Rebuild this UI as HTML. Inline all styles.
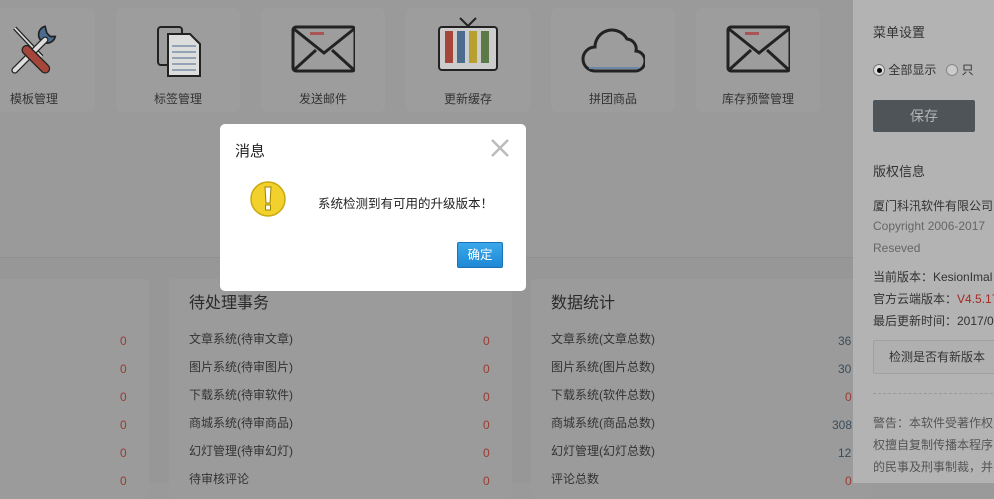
<!DOCTYPE html>
<html><head><meta charset="utf-8"><style>
*{margin:0;padding:0;box-sizing:border-box}
body{width:994px;height:483px;overflow:hidden;position:relative;background:#9a9a9a;font-family:"Liberation Sans","Noto Sans CJK SC",sans-serif;color:#2e2e2e}
.tile{position:absolute;top:8px;width:124px;height:104px;background:#9d9d9d;border-radius:6px}
.tile .lb{position:absolute;top:82px;left:0;width:100%;text-align:center;font-size:12px;color:#333}
.tile svg{position:absolute;top:8px;left:30px}
.band{position:absolute;left:0;top:257px;width:853px;height:226px;background:#979797;border-top:1px solid #909090}
.card{position:absolute;top:279px;height:220px;background:#9b9b9b;border-radius:4px}
.card h3{position:absolute;left:20px;top:10px;font-size:16px;font-weight:normal;color:#2a2a2a}
.row{position:absolute;left:20px;font-size:12px;color:#333}
.num{position:absolute;font-size:12px}
.red{color:#9a3a30}.blu{color:#3a4c5a}
.rp{position:absolute;left:853px;top:0;width:141px;height:483px;background:#b3b3b3;font-size:12px;color:#333;white-space:nowrap;overflow:hidden}
.rp div{position:absolute;left:20px}
.dlg{position:absolute;left:220px;top:124px;width:306px;height:167px;background:#fff;border-radius:5px}
</style></head><body>
<div class="tile" style="left:-29px"><svg width="64" height="64" viewBox="0 0 64 64" style="left:37px;top:15px;width:54px;height:54px"><line x1="8" y1="6" x2="40" y2="40" stroke="#222" stroke-width="5"/><line x1="8" y1="6" x2="40" y2="40" stroke="#ddd" stroke-width="2"/><path d="M44 4a10 10 0 1 0 12 12l-6 0-4-4z" fill="#4b6c8f" stroke="#222" stroke-width="2"/><line x1="44" y1="20" x2="8" y2="56" stroke="#222" stroke-width="8" stroke-linecap="round"/><line x1="44" y1="20" x2="8" y2="56" stroke="#ddd" stroke-width="5" stroke-linecap="round"/><line x1="22" y1="32" x2="44" y2="54" stroke="#222" stroke-width="12" stroke-linecap="round"/><line x1="22" y1="32" x2="44" y2="54" stroke="#a6463a" stroke-width="9" stroke-linecap="round"/></svg><div class="lb" style="left:39px;width:auto">模板管理</div></div>
<div class="tile" style="left:116px"><svg width="64" height="64" viewBox="0 0 64 64"><rect x="12" y="11" width="24" height="38" rx="3" fill="#9d9d9d" stroke="#222" stroke-width="2"/><path d="M22 18h22l10 10v32h-32z" fill="#ddd" stroke="#222" stroke-width="2"/><g stroke="#7990a8" stroke-width="1.5"><line x1="26" y1="30" x2="50" y2="30"/><line x1="26" y1="36" x2="50" y2="36"/><line x1="26" y1="42" x2="50" y2="42"/><line x1="26" y1="48" x2="50" y2="48"/><line x1="26" y1="54" x2="50" y2="54"/></g></svg><div class="lb">标签管理</div></div>
<div class="tile" style="left:261px"><svg width="64" height="64" viewBox="0 0 64 64"><rect x="2" y="11" width="62" height="44" rx="3" fill="#9d9d9d" stroke="#222" stroke-width="3"/><path d="M3 13l30 24 30-24M3 54l22-20M63 54l-22-20" fill="none" stroke="#222" stroke-width="3"/><rect x="19" y="16" width="14" height="3" fill="#a55"/></svg><div class="lb">发送邮件</div></div>
<div class="tile" style="left:406px"><svg width="64" height="64" viewBox="0 0 64 64"><path d="M24 2l8 8 8-8" fill="none" stroke="#222" stroke-width="2"/><rect x="3" y="11" width="58" height="43" rx="3" fill="#ccc" stroke="#222" stroke-width="2"/><rect x="9" y="15" width="8" height="32" fill="#a6463a"/><rect x="21" y="15" width="8" height="32" fill="#4b6c8f"/><rect x="33" y="15" width="8" height="32" fill="#b8a030"/><rect x="45" y="15" width="8" height="32" fill="#5b7a48"/></svg><div class="lb">更新缓存</div></div>
<div class="tile" style="left:551px"><svg width="64" height="64" viewBox="0 0 64 64"><path d="M14 55a12 12 0 0 1 0-24 17 17 0 0 1 32-8 10 10 0 0 1 9 12 10 10 0 0 1-2 20z" fill="#9d9d9d" stroke="#222" stroke-width="3"/><line x1="8" y1="52" x2="58" y2="52" stroke="#6d87a8" stroke-width="2"/></svg><div class="lb">拼团商品</div></div>
<div class="tile" style="left:696px"><svg width="64" height="64" viewBox="0 0 64 64"><rect x="2" y="11" width="62" height="44" rx="3" fill="#9d9d9d" stroke="#222" stroke-width="3"/><path d="M3 13l30 24 30-24M3 54l22-20M63 54l-22-20" fill="none" stroke="#222" stroke-width="3"/><rect x="19" y="16" width="14" height="3" fill="#a55"/></svg><div class="lb">库存预警管理</div></div>
<div class="band"></div>
<div class="card" style="left:-20px;width:169px"><div class="num red" style="left:140px;top:55px">0</div><div class="num red" style="left:140px;top:83px">0</div><div class="num red" style="left:140px;top:111px">0</div><div class="num red" style="left:140px;top:139px">0</div><div class="num red" style="left:140px;top:167px">0</div><div class="num red" style="left:140px;top:195px">0</div></div>
<div class="card" style="left:169px;width:343px"><h3>待处理事务</h3>
<div class="row" style="top:51px">文章系统(待审文章)</div><div class="row" style="top:79px">图片系统(待审图片)</div><div class="row" style="top:107px">下载系统(待审软件)</div><div class="row" style="top:135px">商城系统(待审商品)</div><div class="row" style="top:163px">幻灯管理(待审幻灯)</div><div class="row" style="top:191px">待审核评论</div>
<div class="num red" style="left:314px;top:55px">0</div><div class="num red" style="left:314px;top:83px">0</div><div class="num red" style="left:314px;top:111px">0</div><div class="num red" style="left:314px;top:139px">0</div><div class="num red" style="left:314px;top:167px">0</div><div class="num red" style="left:314px;top:195px">0</div></div>
<div class="card" style="left:531px;width:340px"><h3>数据统计</h3>
<div class="row" style="top:51px">文章系统(文章总数)</div><div class="row" style="top:79px">图片系统(图片总数)</div><div class="row" style="top:107px">下载系统(软件总数)</div><div class="row" style="top:135px">商城系统(商品总数)</div><div class="row" style="top:163px">幻灯管理(幻灯总数)</div><div class="row" style="top:191px">评论总数</div>
<div class="num blu" style="left:307px;top:55px">36</div><div class="num blu" style="left:307px;top:83px">30</div><div class="num red" style="left:314px;top:111px">0</div><div class="num blu" style="left:301px;top:139px">308</div><div class="num blu" style="left:307px;top:167px">12</div><div class="num red" style="left:314px;top:195px">0</div></div>
<div class="rp">
<div style="top:22px;font-size:13px">菜单设置</div>
<div style="top:61px"><span style="display:inline-block;width:12px;height:12px;border:1px solid #777;border-radius:50%;background:#ddd;vertical-align:-2px;position:relative"><span style="position:absolute;left:3px;top:3px;width:5px;height:5px;border-radius:50%;background:#000"></span></span> 全部显示 &nbsp; <span style="display:inline-block;width:12px;height:12px;border:1px solid #888;border-radius:50%;background:#ccc;vertical-align:-2px"></span> 只</div>
<div style="top:100px;width:102px;height:32px;background:#4f5459;border-radius:2px;color:#b3b3b3;font-size:14px;text-align:center;line-height:32px">保存</div>
<div style="top:161px;font-size:13px">版权信息</div>
<div style="top:197px">厦门科汛软件有限公司</div>
<div style="top:219px;color:#666">Copyright 2006-2017</div>
<div style="top:241px;color:#666">Reseved</div>
<div style="top:268px">当前版本：KesionImal</div>
<div style="top:290px">官方云端版本：<span style="color:#a52a22">V4.5.17</span></div>
<div style="top:312px">最后更新时间：2017/0</div>
<div style="top:340px;width:140px;height:34px;border:1px solid #a0a0a0;border-radius:2px;background:#b0b0b0;line-height:32px;padding-left:15px">检测是否有新版本</div>
<div style="top:393px;width:130px;border-top:1px dashed #999"></div>
<div style="top:412px;color:#555;line-height:22px">警告：本软件受著作权<br>权擅自复制传播本程序<br>的民事及刑事制裁，并</div>
</div>
<div class="dlg">
<div style="position:absolute;left:15px;top:16px;font-size:15px;color:#222">消息</div>
<svg width="20" height="20" viewBox="0 0 20 20" style="position:absolute;left:270px;top:14px"><path d="M2 2L18 18M18 2L2 18" stroke="#bbb" stroke-width="2.5"/></svg>
<svg width="38" height="38" viewBox="0 0 38 38" style="position:absolute;left:29px;top:56px"><circle cx="19" cy="19" r="17" fill="#f3d12c" stroke="#c9a80e" stroke-width="1.5"/><path d="M16 7h6l-1 16h-4z" fill="#fff" stroke="#9c8400" stroke-width="1"/><rect x="16.5" y="25" width="5" height="5" fill="#fff" stroke="#9c8400" stroke-width="1"/></svg>
<div style="position:absolute;left:98px;top:69px;font-size:12.5px;color:#222">系统检测到有可用的升级版本<span style="font-family:'Noto Sans CJK SC',sans-serif">！</span></div>
<div style="position:absolute;left:237px;top:118px;width:46px;height:26px;background:linear-gradient(#3aa8ea,#1f88d6);border:1px solid #1a72b8;border-radius:2px;color:#fff;font-size:12.5px;text-align:center;line-height:24px">确定</div>
</div>
</body></html>
